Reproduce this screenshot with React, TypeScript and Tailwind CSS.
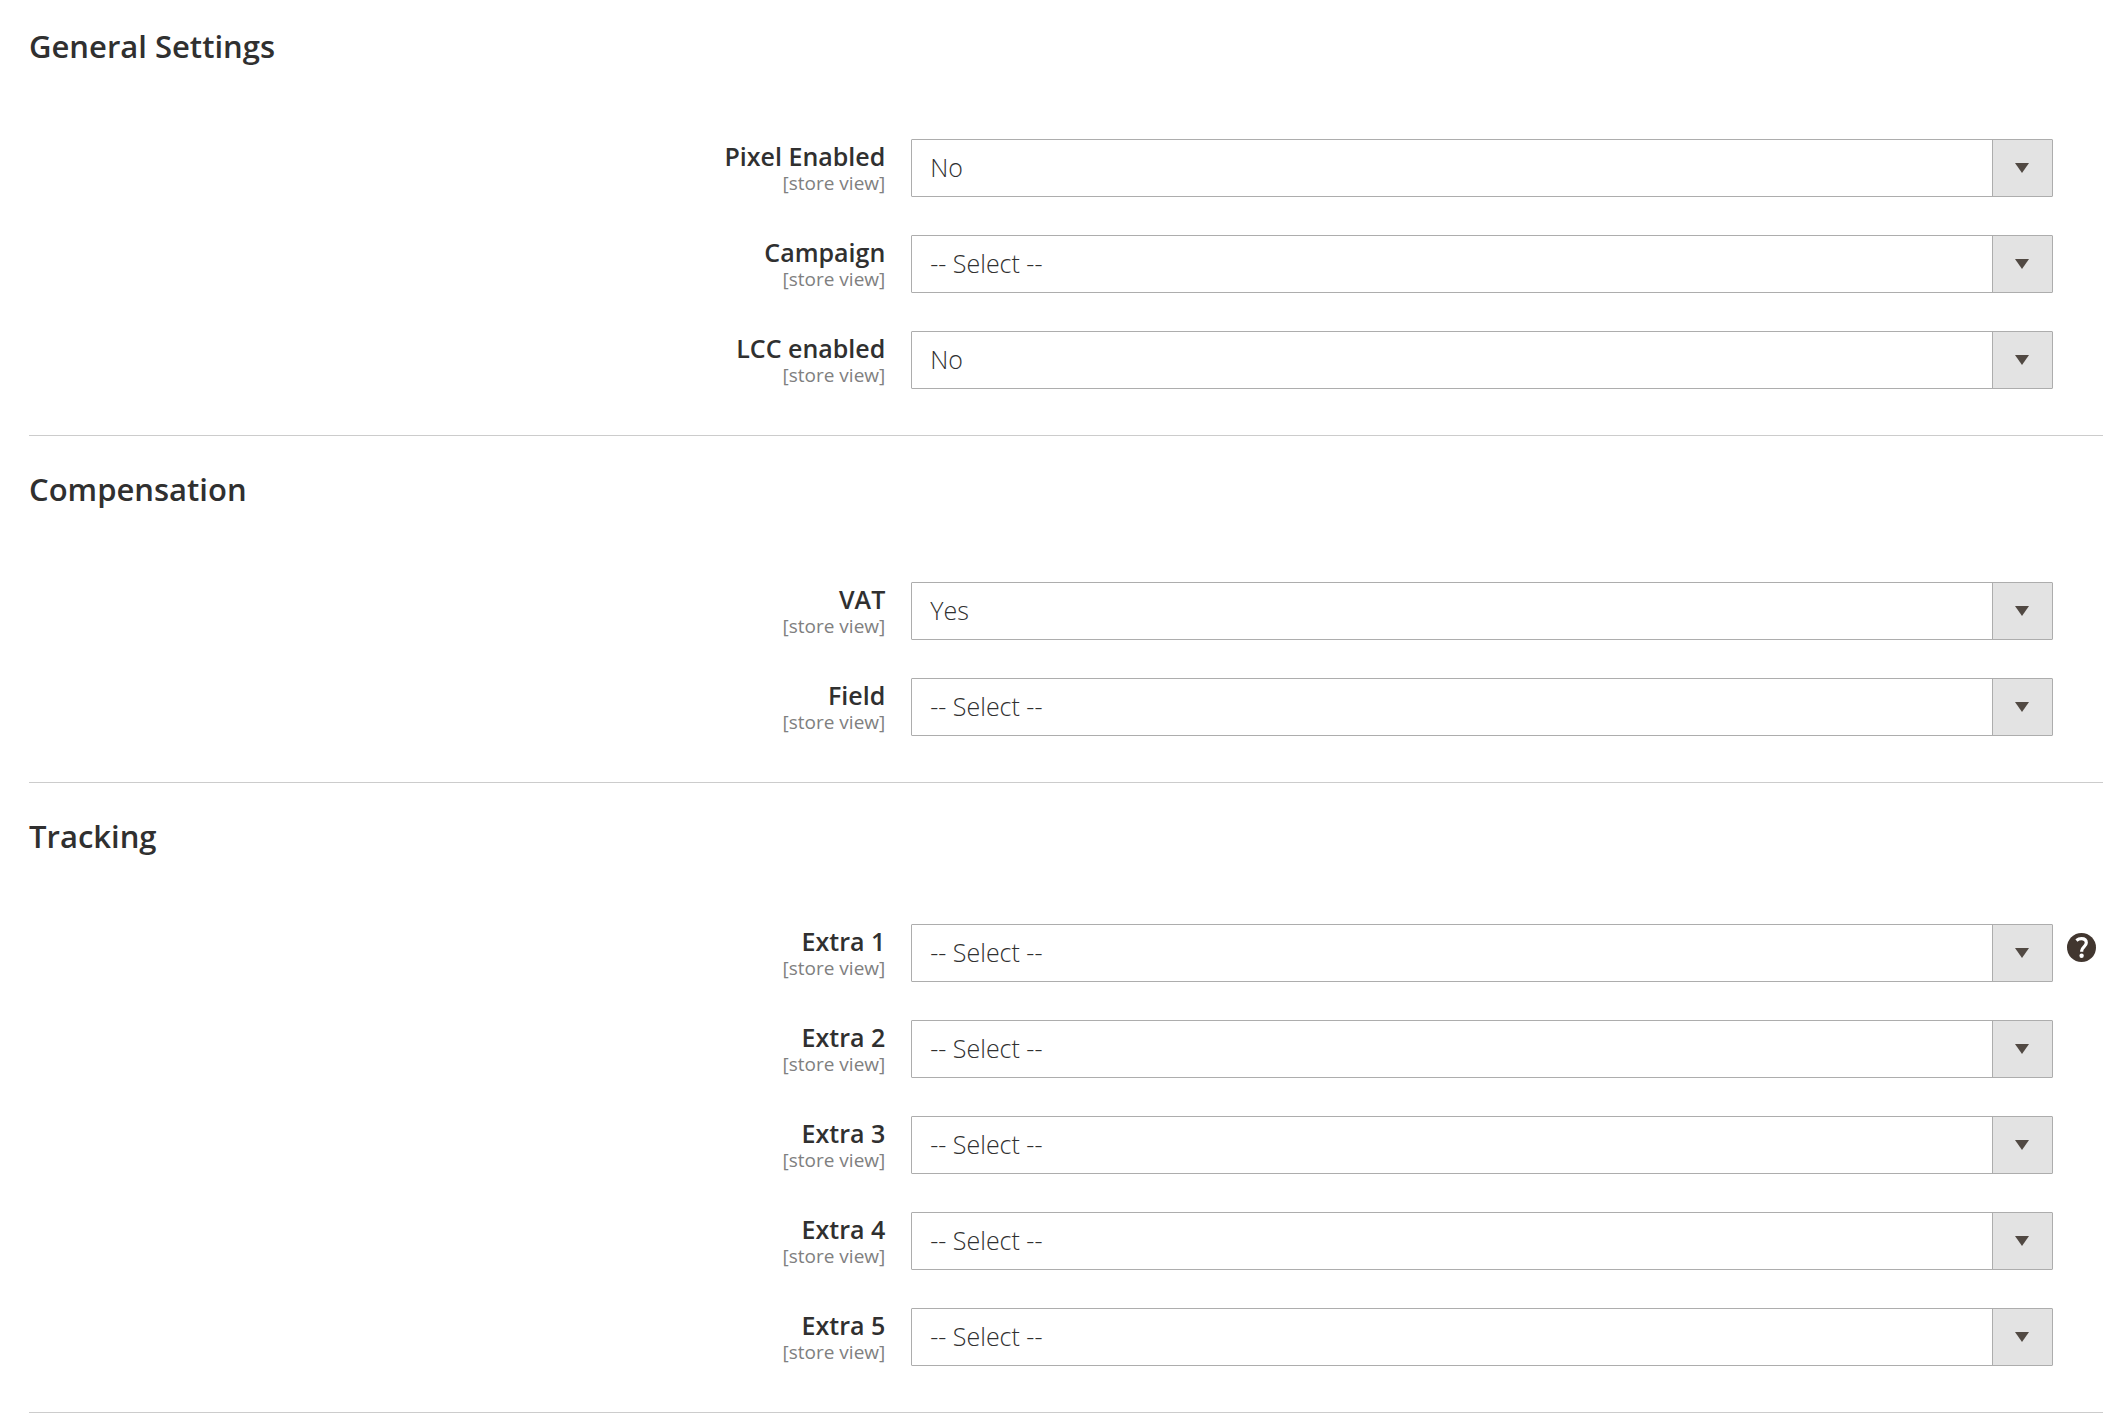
type Field = {
  id: string;
  label: string;
  value: string;
  options: string[];
  help?: string;
};

type Section = {
  title: string;
  titleClass: string;
  fields: Field[];
};

const yesNo = ["Yes", "No"];
const empty = ["-- Select --"];

const sections: Section[] = [
  {
    title: "General Settings",
    titleClass: "pt-[28px] mb-[75px]",
    fields: [
      { id: "pixel_enabled", label: "Pixel Enabled", value: "No", options: yesNo },
      { id: "campaign", label: "Campaign", value: "-- Select --", options: empty },
      { id: "lcc_enabled", label: "LCC enabled", value: "No", options: yesNo },
    ],
  },
  {
    title: "Compensation",
    titleClass: "pt-[35px] mb-[75px]",
    fields: [
      { id: "vat", label: "VAT", value: "Yes", options: yesNo },
      { id: "field", label: "Field", value: "-- Select --", options: empty },
    ],
  },
  {
    title: "Tracking",
    titleClass: "pt-[35px] mb-[70px]",
    fields: [
      { id: "extra_1", label: "Extra 1", value: "-- Select --", options: empty, help: "Help for Extra 1" },
      { id: "extra_2", label: "Extra 2", value: "-- Select --", options: empty },
      { id: "extra_3", label: "Extra 3", value: "-- Select --", options: empty },
      { id: "extra_4", label: "Extra 4", value: "-- Select --", options: empty },
      { id: "extra_5", label: "Extra 5", value: "-- Select --", options: empty },
    ],
  },
];

function HelpIcon() {
  return (
    <svg viewBox="0 0 29 29" className="size-[29px]" aria-hidden="true">
      <circle cx="14.5" cy="14.5" r="14.5" fill="#41362f" />
      <path
        d="M9.4 7.4c1.5-1.2 3-1.8 5-1.8 3.2 0 4.9 1.5 4.9 4.1 0 3.9-4.6 4.3-4.6 8.1v1"
        fill="none"
        stroke="#fff"
        strokeWidth="3.2"
      />
      <circle cx="14.6" cy="22.7" r="2.2" fill="#fff" />
    </svg>
  );
}

function FieldRow({ field }: { field: Field }) {
  return (
    <div className="grid grid-cols-[3fr_26px_4fr_50px] items-center">
      <label htmlFor={field.id} className="text-right">
        <span className="block text-[25px] leading-[30px] font-semibold">{field.label}</span>
        <span className="block text-[19px] leading-[24px] text-[#808080]">[store view]</span>
      </label>
      <div className="relative col-start-3">
        <select
          id={field.id}
          defaultValue={field.value}
          className="block h-[58px] w-full appearance-none rounded-[1px] border border-[#adadad] bg-white pl-[18px] pr-[72px] text-[25px] font-light"
        >
          {field.options.map((option) => (
            <option key={option}>{option}</option>
          ))}
        </select>
        <span className="pointer-events-none absolute inset-y-px right-px flex w-[60px] items-center justify-center border-l border-[#adadad] bg-[#e3e3e3]">
          <svg viewBox="0 0 14 10" className="h-[10px] w-[14px]" aria-hidden="true">
            <path d="M0 0h14L7 10z" fill="#514943" />
          </svg>
        </span>
      </div>
      {field.help && (
        <button type="button" aria-label={field.help} className="col-start-4 self-start pt-[9px] pl-[14px]">
          <HelpIcon />
        </button>
      )}
    </div>
  );
}

export default function App() {
  return (
    <form className="bg-white pl-[29px] font-['Open_Sans',sans-serif] text-[#303030]">
      {sections.map((section) => (
        <section key={section.title} className="border-b border-[#cccccc] pb-[46px]">
          <h2 className={`text-[31px] leading-[36px] font-semibold ${section.titleClass}`}>{section.title}</h2>
          <div className="flex flex-col gap-[38px]">
            {section.fields.map((field) => (
              <FieldRow key={field.id} field={field} />
            ))}
          </div>
        </section>
      ))}
    </form>
  );
}
